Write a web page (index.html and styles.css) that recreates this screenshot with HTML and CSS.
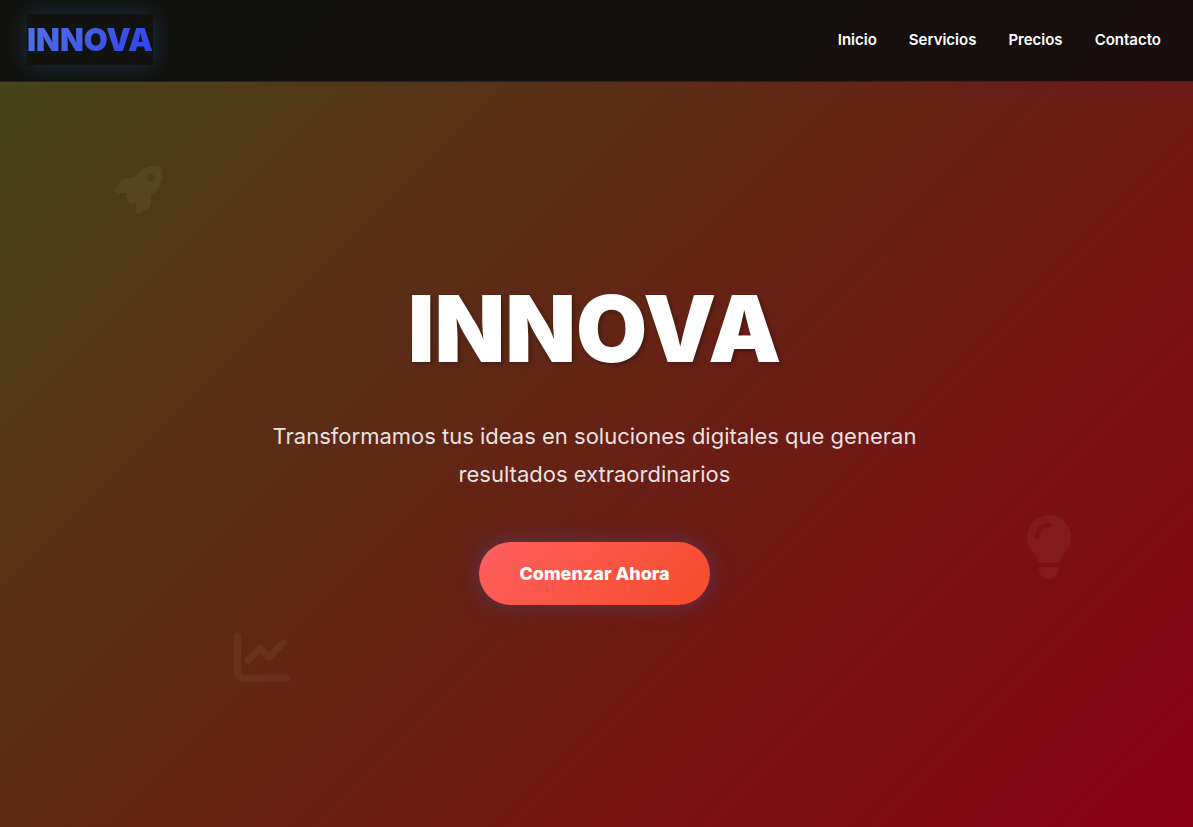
FILE: index.html
```html
<!DOCTYPE html>
<html lang="es">
<head>
<meta charset="utf-8">
<meta name="viewport" content="width=device-width, initial-scale=1">
<title>INNOVA</title>
<link rel="stylesheet" href="styles.css">
</head>
<body>
<header class="header">
  <a class="logo" href="#inicio"><span class="logo-text">INNOVA</span></a>
  <nav class="nav">
    <a href="#inicio">Inicio</a>
    <a href="#servicios">Servicios</a>
    <a href="#precios">Precios</a>
    <a href="#contacto">Contacto</a>
  </nav>
</header>
<main class="hero" id="inicio">
  <svg class="floating rocket" viewBox="0 0 512 512" aria-hidden="true"><path d="M156.6 384.9L125.7 354c-8.5-8.5-11.5-20.8-7.7-32.2c3-8.9 7-20.5 11.8-33.8H24c-8.6 0-16.6-4.6-20.9-12.1s-4.2-16.7 .2-24.1l52.5-88.5c13-21.9 36.5-35.3 61.9-35.3l82.3 0c2.4-4 4.8-7.7 7.2-11.3C289.1-4.1 411.1-8.1 483.9 5.3c11.6 2.1 20.6 11.2 22.8 22.8c13.4 72.9 9.3 194.8-111.4 276.7c-3.5 2.4-7.3 4.8-11.3 7.2v82.3c0 25.4-13.4 49-35.3 61.9l-88.5 52.5c-7.4 4.4-16.6 4.5-24.1 .2s-12.1-12.2-12.1-20.9V380.8c-14.1 4.9-26.4 8.9-35.7 11.9c-11.2 3.6-23.4 .5-31.8-7.8zM384 168a40 40 0 1 0 0-80 40 40 0 1 0 0 80z"/></svg>
  <svg class="floating bulb" viewBox="0 0 384 512" aria-hidden="true"><path d="M272 384c9.6-31.9 29.5-59.1 49.2-86.2l0 0c5.2-7.1 10.4-14.2 15.4-21.4c19.8-28.5 31.4-63 31.4-100.3C368 78.8 289.2 0 192 0S16 78.8 16 176c0 37.3 11.6 71.9 31.4 100.3c5 7.2 10.2 14.3 15.4 21.4l0 0c19.8 27.1 39.7 54.4 49.2 86.2H272zM192 512c44.2 0 80-35.8 80-80V416H112v16c0 44.2 35.8 80 80 80zM112 176c0 8.8-7.2 16-16 16s-16-7.2-16-16c0-61.9 50.1-112 112-112c8.8 0 16 7.2 16 16s-7.2 16-16 16c-44.2 0-80 35.8-80 80z"/></svg>
  <svg class="floating chart" viewBox="0 0 512 512" aria-hidden="true"><path d="M64 64c0-17.7-14.3-32-32-32S0 46.3 0 64V400c0 44.2 35.8 80 80 80H480c17.7 0 32-14.3 32-32s-14.3-32-32-32H80c-8.8 0-16-7.2-16-16V64zm406.6 86.6c12.5-12.5 12.5-32.8 0-45.3s-32.8-12.5-45.3 0L320 210.7l-57.4-57.4c-12.5-12.5-32.8-12.5-45.3 0l-112 112c-12.5 12.5-12.5 32.8 0 45.3s32.8 12.5 45.3 0L240 221.3l57.4 57.4c12.5 12.5 32.8 12.5 45.3 0l128-128z"/></svg>
  <h1 class="title">INNOVA</h1>
  <p class="subtitle">Transformamos tus ideas en soluciones digitales que generan resultados extraordinarios</p>
  <button class="cta" type="button">Comenzar Ahora</button>
</main>
</body>
</html>
```
FILE: styles.css
```css
* {
  box-sizing: border-box;
  margin: 0;
  padding: 0;
}

body {
  display: flex;
  flex-direction: column;
  min-height: 100vh;
  font-family: Inter, "Liberation Sans", sans-serif;
  color: #fff;
  background: linear-gradient(135deg, #434618 0%, #5c2b16 38%, #8b0014 100%);
}

.header {
  display: flex;
  align-items: center;
  justify-content: space-between;
  padding: 14px 32px 16px 27px;
  background: linear-gradient(135deg, #12130e, #14120e 55%, #190e0e);
  border-bottom: 1px solid #2b2822;
}

.logo {
  text-decoration: none;
  box-shadow: 0 0 20px rgba(33, 100, 170, 0.38);
}

.logo-text {
  display: block;
  font-size: 31px;
  line-height: 51px;
  font-weight: 900;
  color: transparent;
  background: linear-gradient(135deg, #5577e8, #2b3fee);
  background-clip: text;
  -webkit-background-clip: text;
}

.nav {
  display: flex;
  gap: 32px;
}

.nav a {
  font-size: 15px;
  line-height: 24px;
  font-weight: 600;
  color: #fff;
  text-decoration: none;
}

.hero {
  position: relative;
  flex: 1;
  display: flex;
  flex-direction: column;
  align-items: center;
  justify-content: center;
  padding: 0 20px 34px 16px;
  text-align: center;
}

.title {
  margin-bottom: 31px;
  font-size: 92px;
  line-height: 115px;
  font-weight: 900;
  text-shadow: 2px 2px 4px rgba(0, 0, 0, 0.3);
}

.subtitle {
  max-width: 700px;
  margin-bottom: 49px;
  font-size: 22px;
  line-height: 38px;
  color: rgba(255, 255, 255, 0.88);
}

.cta {
  padding: 16px 40px;
  border: 0;
  border-radius: 50px;
  font: inherit;
  font-size: 18px;
  line-height: 31px;
  font-weight: 800;
  color: #fff;
  background: linear-gradient(135deg, #ff6060, #f64b29);
  box-shadow: 0 0 20px rgba(72, 80, 140, 0.5);
  cursor: pointer;
}

.floating {
  position: absolute;
  fill: rgba(255, 255, 255, 0.05);
}

.rocket {
  top: 84px;
  left: 115px;
  width: 48px;
}

.bulb {
  top: 433px;
  right: 120px;
  width: 48px;
}

.chart {
  bottom: 142px;
  left: 234px;
  width: 56px;
}
```
